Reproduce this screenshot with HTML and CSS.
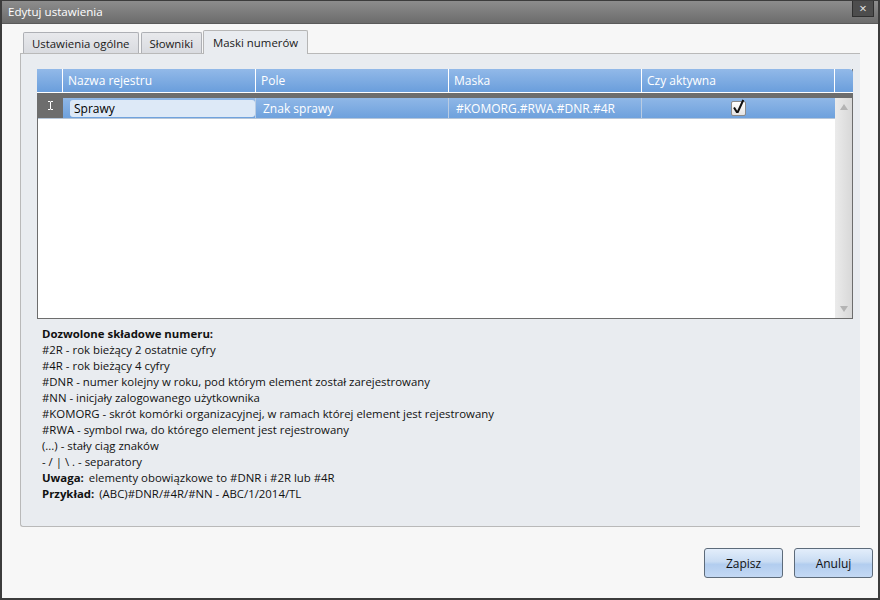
FILE: index.html
```html
<!DOCTYPE html>
<html>
  <head>
    <meta charset="utf-8">
    <title>Edytuj ustawienia</title>
    <link rel="stylesheet" href="styles.css">
  </head>
  <body>
    <div class="window">
      <div class="titlebar">
        <span class="title">Edytuj ustawienia</span>
        <a class="close" href="#">×</a>
      </div>
      <div class="content">
        <div class="tabs">
          <div class="tab">Ustawienia ogólne</div>
          <div class="tab">Słowniki</div>
          <div class="tab tab-active">Maski numerów</div>
        </div>
        <div class="panel">
          <div class="grid">
            <div class="grid-head">
              <div class="hcell hcorner"></div>
              <div class="hcell">Nazwa rejestru</div>
              <div class="hcell">Pole</div>
              <div class="hcell">Maska</div>
              <div class="hcell">Czy aktywna</div>
              <div class="hcell hfill"></div>
            </div>
            <div class="grid-body">
              <div class="rows">
                <div class="row">
                  <div class="rowhead">
                    <svg width="7" height="9" viewBox="0 0 7 9">
                      <path d="M1 0.5h2l0.5 0.5l0.5 -0.5h2M3.5 1v7M1 8.5h2l0.5 -0.5l0.5 0.5h2" stroke="#fff" stroke-width="1" fill="none"/>
                    </svg>
                  </div>
                  <div class="cell"><div class="editbox">Sprawy</div></div>
                  <div class="cell">Znak sprawy</div>
                  <div class="cell">#KOMORG.#RWA.#DNR.#4R</div>
                  <div class="cell cell-center">
                    <span class="checkbox">
                      <svg width="16" height="16" viewBox="0 0 16 16">
                        <path d="M3 8.5l2.8 4.5h1l5.5 -12" stroke="#111" stroke-width="2" fill="none"/>
                      </svg>
                    </span>
                  </div>
                </div>
              </div>
              <div class="scrollbar">
                <span class="arrow-up"></span>
                <span class="arrow-down"></span>
              </div>
            </div>
          </div>
          <div class="help">
            <div><b>Dozwolone składowe numeru:</b></div>
            <div>#2R - rok bieżący 2 ostatnie cyfry</div>
            <div>#4R - rok bieżący 4 cyfry</div>
            <div>#DNR - numer kolejny w roku, pod którym element został zarejestrowany</div>
            <div>#NN - inicjały zalogowanego użytkownika</div>
            <div>#KOMORG - skrót komórki organizacyjnej, w ramach której element jest rejestrowany</div>
            <div>#RWA - symbol rwa, do którego element jest rejestrowany</div>
            <div>(...) - stały ciąg znaków</div>
            <div>- / | \ . - separatory</div>
            <div><b>Uwaga:</b> elementy obowiązkowe to #DNR i #2R lub #4R</div>
            <div><b>Przykład:</b> (ABC)#DNR/#4R/#NN - ABC/1/2014/TL</div>
          </div>
        </div>
        <div class="buttons">
          <button class="btn">Zapisz</button>
          <button class="btn">Anuluj</button>
        </div>
      </div>
    </div>
  </body>
</html>
```

FILE: styles.css
```css
body, html {
  margin: 0px;
  padding: 0px;
  height: 100%;
}
body {
  font-family: "Open Sans", "Noto Sans", sans-serif;
  font-size: 11.4px;
  color: #000;
}
.window {
  width: 880px;
  height: 600px;
  box-sizing: border-box;
  border: 2px solid #3c3c3c;
  border-top-width: 1px;
  background: #f7f7f7;
  display: flex;
  flex-direction: column;
}
.titlebar {
  height: 22px;
  background: linear-gradient(#8d8d8d, #6c6c6c);
  display: flex;
  align-items: flex-start;
  justify-content: space-between;
  border-bottom: 1px solid #5a5a5a;
}
.title {
  color: #fff;
  font-size: 11.6px;
  padding: 3px 0 0 6px;
}
.close {
  width: 22px;
  height: 16px;
  box-sizing: border-box;
  margin: 0 4px 0 0;
  background: #4d4d4d;
  border: 1px solid #2f2f2f;
  border-top: none;
  color: #e8e8e8;
  text-decoration: none;
  text-align: center;
  font-size: 13px;
  line-height: 14px;
}
.content {
  flex: 1;
  display: flex;
  flex-direction: column;
  padding: 5px 18px 0 18px;
}
.tabs {
  display: flex;
  align-items: flex-end;
  padding-left: 3px;
  height: 24px;
}
.tab {
  height: 21px;
  box-sizing: border-box;
  padding: 3px 8px 0 8px;
  margin-right: 2px;
  background: linear-gradient(#e8e9ec, #d9dbe0);
  border: 1px solid #aeb0b5;
  border-bottom: none;
  border-radius: 2px 2px 0 0;
  color: #1a1a1a;
}
.tab-active {
  height: 24px;
  margin-right: 0;
  margin-left: -1px;
  padding: 4px 9px 0 9px;
  background: #e9ecf0;
  border-color: #b5b5b5;
  position: relative;
  top: 1px;
}
.panel {
  height: 474px;
  box-sizing: border-box;
  background: #e9ecf0;
  border: 1px solid #b9b9b9;
  border-right: none;
  border-radius: 0 0 0 3px;
  padding: 15px 7px 0 16px;
}
.grid {
  height: 250px;
  display: flex;
  flex-direction: column;
  background: #fff;
  border: 1px solid #6d6d6d;
  border-top: none;
  box-sizing: border-box;
}
.grid-head {
  display: grid;
  grid-template-columns: 26px 193px 193px 193px 193px 17px;
  height: 23px;
  background: linear-gradient(#92b9e8, #6a9edc);
  border-radius: 0 4px 0 0;
  margin: 0 -1px;
  border-bottom: 1px solid #fff;
}
.hcell {
  color: #fff;
  font-size: 12px;
  padding: 3px 0 0 5px;
  border-right: 1px solid #fff;
  white-space: nowrap;
}
.hcorner {
  padding: 0;
}
.hfill {
  border-right: none;
}
.grid-body {
  flex: 1;
  display: flex;
  border-top: 5px solid #6d6d6d;
}
.rows {
  flex: 1;
}
.row {
  display: grid;
  grid-template-columns: 25px 193px 193px 193px 193px;
  height: 21px;
  background: linear-gradient(#8fb7e7, #6ea1dd);
  border-bottom: 1px solid #b6c6d9;
  box-sizing: border-box;
}
.rowhead {
  background: #6d6d6d;
  display: flex;
  align-items: center;
  justify-content: center;
  margin-top: -5px;
}
.cell {
  color: #fff;
  font-size: 12px;
  padding: 2px 0 0 7px;
  border-right: 1px solid #b9cce3;
  white-space: nowrap;
}
.cell:first-of-type {
  padding: 1px 2px 0 1px;
}
.cell-center {
  padding: 0;
  display: flex;
  justify-content: center;
  align-items: center;
  border-right: none;
}
.editbox {
  height: 17px;
  box-sizing: border-box;
  background: #dde9f7;
  border-radius: 3px;
  color: #000;
  padding: 0 4px;
  line-height: 17px;
}
.checkbox {
  width: 15px;
  height: 15px;
  box-sizing: border-box;
  background: linear-gradient(#fff, #e4e4e4);
  border: 1px solid #8a8a8a;
  border-radius: 2px;
  display: block;
  position: relative;
}
.checkbox svg {
  position: absolute;
  left: -1px;
  top: -3px;
}
.scrollbar {
  width: 17px;
  background: linear-gradient(to right, #ebebeb, #d8d8d8);
  display: flex;
  flex-direction: column;
  justify-content: space-between;
  align-items: center;
  padding: 6px 0 6px 0;
}
.arrow-up {
  border: 4px solid transparent;
  border-bottom: 6px solid #b4b4b4;
  border-top: none;
}
.arrow-down {
  border: 4px solid transparent;
  border-top: 6px solid #b4b4b4;
  border-bottom: none;
}
.help {
  padding: 7px 0 0 5px;
  line-height: 16px;
  color: #111;
}
.help b {
  margin-right: 2px;
}
.buttons {
  display: flex;
  justify-content: flex-end;
  gap: 11px;
  padding: 21px 0 0 0;
  margin-right: -13px;
}
.btn {
  width: 79px;
  height: 30px;
  font-family: inherit;
  font-size: 12px;
  color: #111;
  background: linear-gradient(#e3eefb 0%, #c9dcf3 45%, #b2cdef 55%, #c4d9f4 100%);
  border: 1px solid #5d6b7a;
  border-radius: 3px;
}
```
